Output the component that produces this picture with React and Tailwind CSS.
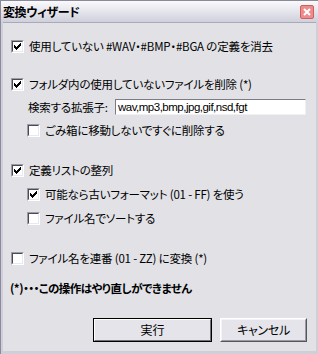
import React from "react";

const font = { fontFamily: '"Noto Sans CJK JP", "Liberation Sans", sans-serif' };

function Check({ checked }) {
  return (
    <div className="w-[13px] h-[13px] shrink-0 border border-t-[#9c9ca8] border-l-[#9c9ca8] border-b-white border-r-white">
      <div className="w-full h-full bg-white border border-t-[#4a4a55] border-l-[#4a4a55] border-b-[#e8e8ee] border-r-[#e8e8ee] flex items-center justify-center">
        {checked && (
          <svg width="7" height="7" viewBox="0 0 7 7" shapeRendering="crispEdges">
            <path d="M6 0h1v3h-1v1h-1v1h-1v1h-1v1h-1v-1h-1v-1h-1v-3h1v1h1v1h1v-1h1v-1h1z" fill="#000" />
          </svg>
        )}
      </div>
    </div>
  );
}

function Row({ checked, children, className }) {
  return (
    <div className={"flex items-center h-[16px] " + className}>
      <Check checked={checked} />
      <span className="ml-[5px] text-[11.5px] tracking-[-0.2px] leading-[16px] text-black whitespace-nowrap">{children}</span>
    </div>
  );
}

export default function App() {
  return (
    <div
      className="w-[318px] h-[354px] bg-[#cfcfda] border-l border-t border-[#8a8a9c] flex flex-col [font-feature-settings:'palt']"
      style={font}
    >
      <div className="h-[21px] shrink-0 flex items-center justify-between pl-[2px] pr-[4px] bg-gradient-to-b from-[#fafafc] to-[#d0d0dc]">
        <span className="text-[12px] font-bold text-black leading-[14px] tracking-[-0.4px]">変換ウィザード</span>
        <div className="w-[14px] h-[14px] rounded-[2px] bg-[#ec8c8c] border border-[#d06060] flex items-center justify-center">
          <svg width="8" height="8" viewBox="0 0 8 8">
            <path d="M1 1L7 7M7 1L1 7" stroke="#fff" strokeWidth="2" />
          </svg>
        </div>
      </div>
      <div className="flex-1 mx-[2px] mb-[3px] bg-[#e1e1e6] border-t border-[#a9a9ba] flex flex-col pl-[8px] pr-[9px]">
        <Row checked className="mt-[15px]">使用していない #WAV・#BMP・#BGA の定義を消去</Row>
        <Row checked className="mt-[22px]">フォルダ内の使用していないファイルを削除 (*)</Row>
        <div className="flex items-center mt-[7px] pl-[17px] h-[16px]">
          <span className="text-[11.5px] tracking-[-0.2px] leading-[16px] whitespace-nowrap w-[87px]">検索する拡張子:</span>
          <div className="w-[191px] h-[16px] bg-white border border-t-[#7a7a88] border-l-[#7a7a88] border-b-[#f0f0f4] border-r-[#f0f0f4] flex items-center pl-[2px] overflow-hidden">
            <span className="text-[11.5px] tracking-[-0.5px] leading-[14px] whitespace-nowrap" style={{ fontFamily: '"Liberation Sans", sans-serif' }}>wav,mp3,bmp,jpg,gif,nsd,fgt</span>
          </div>
        </div>
        <Row className="mt-[7px] pl-[16px]">ごみ箱に移動しないですぐに削除する</Row>
        <Row checked className="mt-[24px]">定義リストの整列</Row>
        <Row checked className="mt-[8px] pl-[16px]">可能なら古いフォーマット (01 - FF) を使う</Row>
        <Row className="mt-[8px] pl-[16px]">ファイル名でソートする</Row>
        <Row className="mt-[24px]">ファイル名を連番 (01 - ZZ) に変換 (*)</Row>
        <div className="mt-[14px] h-[16px] -ml-[1px] text-[11.5px] tracking-[-0.5px] leading-[16px] font-bold whitespace-nowrap">(*)・・・この操作はやり直しができません</div>
        <div className="mt-[22px] flex justify-end gap-[8px]">
          <button className="w-[119px] h-[24px] bg-[#e4e4ea] border border-black text-[12px] leading-[14px] text-black">
            <div className="w-full h-full border border-t-white border-l-white border-b-[#707078] border-r-[#707078] flex items-center justify-center">実行</div>
          </button>
          <button className="w-[87px] h-[24px] bg-[#e4e4ea] border border-t-white border-l-white border-b-[#55555c] border-r-[#55555c] text-[12px] leading-[14px] text-black">
            <div className="w-full h-full border border-t-[#f4f4f8] border-l-[#f4f4f8] border-b-[#9a9aa4] border-r-[#9a9aa4] flex items-center justify-center tracking-[-0.3px]">キャンセル</div>
          </button>
        </div>
      </div>
    </div>
  );
}
